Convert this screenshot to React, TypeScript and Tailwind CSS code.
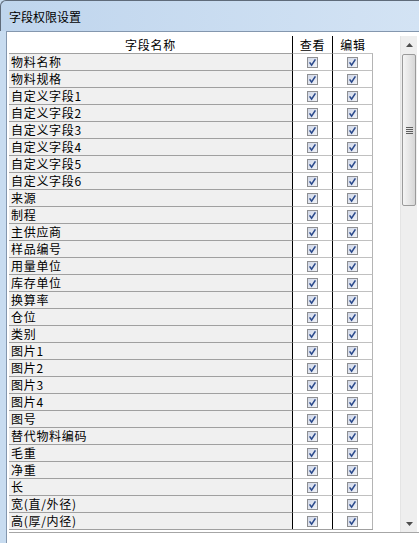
import React from "react";

const fields = [
  "物料名称", "物料规格", "自定义字段1", "自定义字段2", "自定义字段3", "自定义字段4",
  "自定义字段5", "自定义字段6", "来源", "制程", "主供应商", "样品编号", "用量单位",
  "库存单位", "换算率", "仓位", "类别", "图片1", "图片2", "图片3", "图片4", "图号",
  "替代物料编码", "毛重", "净重", "长", "宽(直/外径)", "高(厚/内径)",
];

const Check = () => (
  <svg width="11" height="11" viewBox="0 0 11 11">
    <defs>
      <linearGradient id="cb" x1="0" y1="0" x2="1" y2="1">
        <stop offset="0" stopColor="#cfd6e6" />
        <stop offset="1" stopColor="#f2f4f9" />
      </linearGradient>
    </defs>
    <rect x="0.5" y="0.5" width="10" height="10" fill="url(#cb)" stroke="#8e8f92" />
    <path d="M2.6 5.4 L4.6 8.2 L8.4 2.4" fill="none" stroke="#2b4a8c" strokeWidth="1.6" />
  </svg>
);

const Scrollbar = () => (
  <div className="w-[17px] h-full flex flex-col bg-[#eeeeee] border-l border-[#e4e4e4]">
    <div className="h-[17px] flex items-center justify-center">
      <svg width="7" height="4" viewBox="0 0 7 4"><path d="M0 4 L3.5 0 L7 4 Z" fill="#4d4d4d" /></svg>
    </div>
    <div className="mx-[1px] mt-[1px] h-[152px] rounded-[2px] border border-[#9a9a9a] bg-gradient-to-r from-[#f4f4f4] via-[#e6e6e6] to-[#d6d6d6] flex items-center justify-center">
      <div className="flex flex-col gap-[1px]">
        <div className="w-[7px] h-[1px] bg-[#5d5d5d]" />
        <div className="w-[7px] h-[1px] bg-[#5d5d5d]" />
        <div className="w-[7px] h-[1px] bg-[#5d5d5d]" />
        <div className="w-[7px] h-[1px] bg-[#5d5d5d]" />
      </div>
    </div>
    <div className="flex-1" />
    <div className="h-[17px] flex items-center justify-center">
      <svg width="7" height="4" viewBox="0 0 7 4"><path d="M0 0 L7 0 L3.5 4 Z" fill="#4d4d4d" /></svg>
    </div>
  </div>
);

export default function App() {
  return (
    <div
      className="w-[419px] h-[543px] overflow-hidden bg-[#c8dcf0] flex flex-col text-black"
      style={{ fontFamily: '"Noto Sans CJK SC", "Noto Sans", sans-serif' }}
    >
      <div className="h-[31px] shrink-0 rounded-tl-[6px] border-t border-l border-[#5f6b7a] bg-gradient-to-r from-[#bfd5ed] to-[#d3e3f4] flex items-center pl-[8px] pt-[2px] text-[12px]">
        字段权限设置
      </div>
      <div className="flex-1 ml-[6px] border-l border-t border-[#8497ae] bg-white pt-[4px] pl-[2px] flex flex-col">
        <div className="flex h-[497px] border-b border-[#a6a6a6]">
          <div className="w-[391px] flex flex-col">
            <div className="flex h-[17px] text-[12px] tracking-[0.7px] leading-[17px]">
              <div className="w-[284px] text-center border-r border-black">字段名称</div>
              <div className="w-[40px] text-center border-r border-black">查看</div>
              <div className="w-[40px] text-center">编辑</div>
            </div>
            {fields.map((f) => (
              <div key={f} className="flex h-[17px] text-[12px] tracking-[0.7px] leading-[16px]">
                <div className="w-[284px] bg-[#f0f0f0] border-t border-[#a0a0a0] border-r border-r-black pl-[2px] whitespace-nowrap">
                  {f}
                </div>
                <div className="w-[40px] bg-white border-t border-[#c0c0c0] border-r border-r-black flex items-center justify-center">
                  <Check />
                </div>
                <div className="w-[40px] bg-white border-t border-[#c0c0c0] border-r border-r-[#b4b4b4] flex items-center justify-center">
                  <Check />
                </div>
              </div>
            ))}
            <div className="flex h-0">
              <div className="w-[364px] border-t border-[#a0a0a0]" />
            </div>
          </div>
          <Scrollbar />
        </div>
      </div>
    </div>
  );
}
